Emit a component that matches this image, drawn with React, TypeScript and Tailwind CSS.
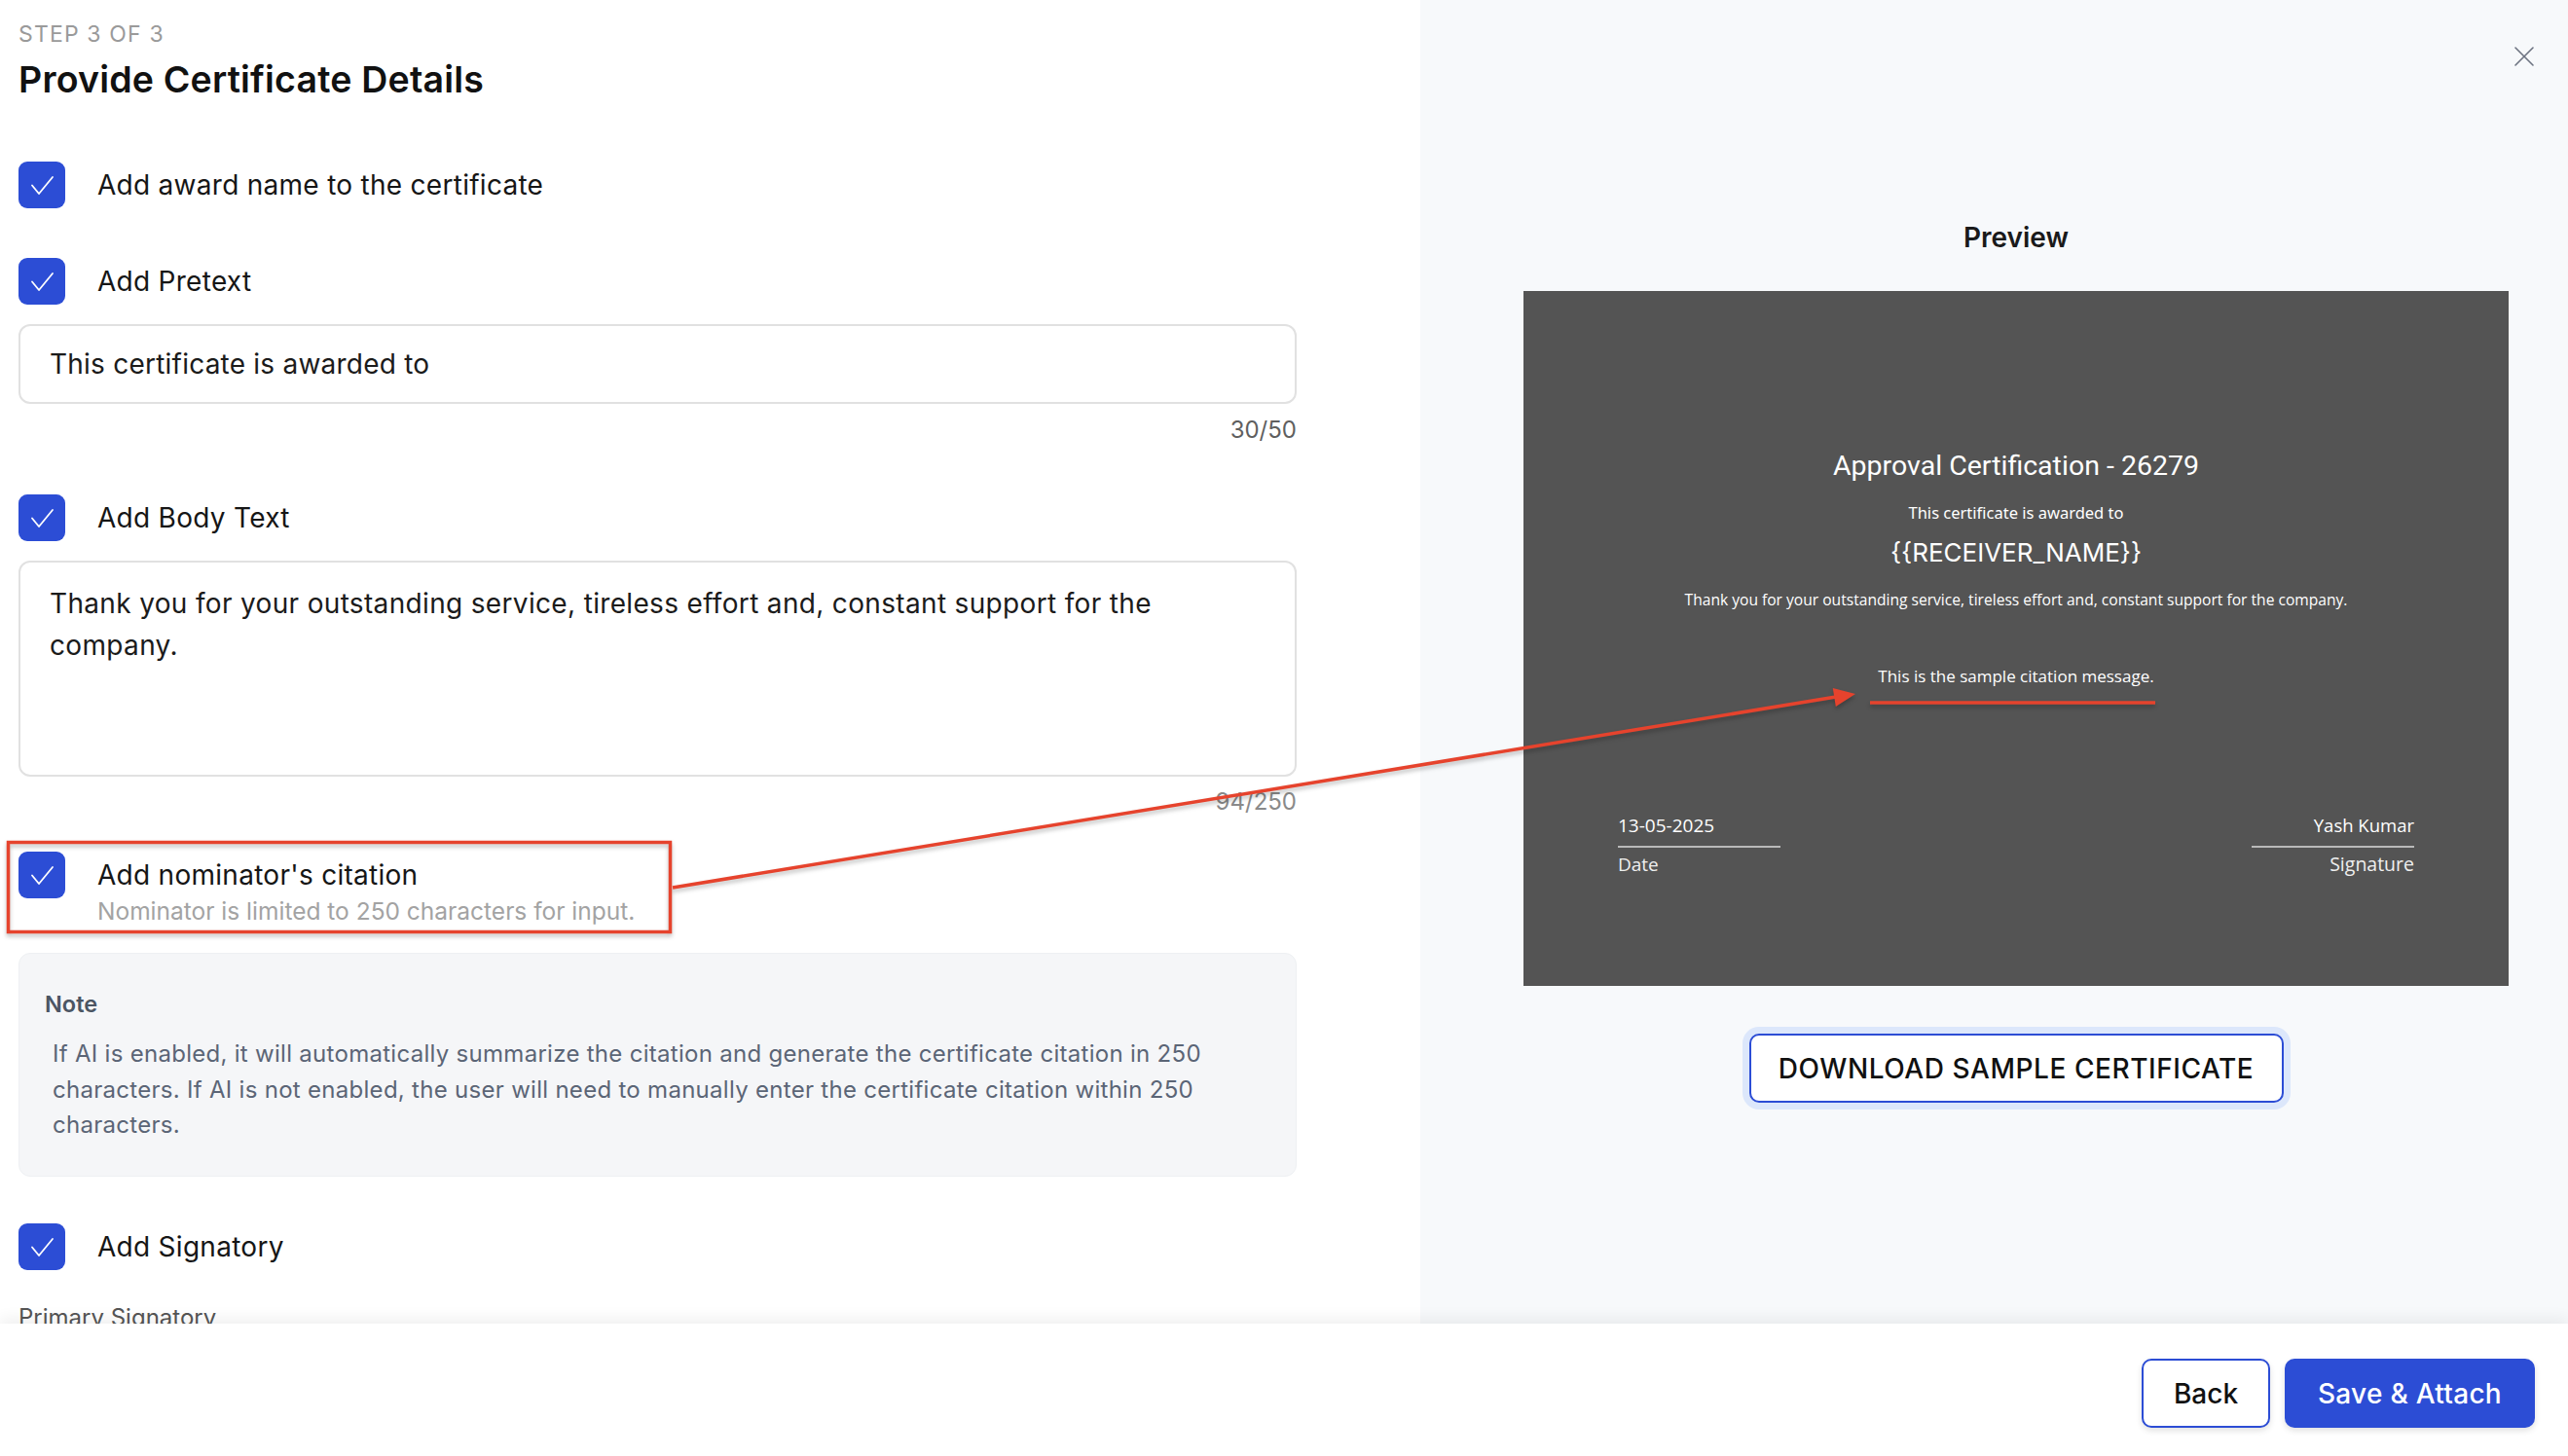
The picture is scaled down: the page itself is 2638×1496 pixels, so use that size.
import React from "react";

function CheckBox() {
  return (
    <div className="flex h-12 w-12 shrink-0 items-center justify-center rounded-[9px] bg-[#2c4dd5]">
      <svg viewBox="0 0 48 48" className="h-12 w-12" fill="none">
        <path d="M14 24.5 L21 33 L35 16" stroke="white" strokeWidth={1.8} strokeLinecap="round" strokeLinejoin="round" />
      </svg>
    </div>
  );
}

function CheckRow({ label, className = "" }: { label: string; className?: string }) {
  return (
    <div className={`flex items-center gap-[33px] ${className}`}>
      <CheckBox />
      <span className="text-[28px] leading-[48px] tracking-[0.01em] text-[#161616]">{label}</span>
    </div>
  );
}

function Certificate() {
  return (
    <div className="flex h-[714px] w-[1012px] shrink-0 flex-col items-center bg-[#545454] pt-[163px] text-white">
      <p className="font-['Roboto',sans-serif] text-[28.5px] leading-[33px]">Approval Certification - 26279</p>
      <p className="mt-[22px] font-['Noto_Sans',sans-serif] text-[16.5px] leading-[20px]">This certificate is awarded to</p>
      <p className="mt-[16px] font-['Inter',sans-serif] text-[26px] leading-[30px]">{"{{RECEIVER_NAME}}"}</p>
      <p className="mt-[23px] font-['Open_Sans',sans-serif] text-[15.6px] leading-[20px]">
        Thank you for your outstanding service, tireless effort and, constant support for the company.
      </p>
      <p className="mt-[58px] font-['Open_Sans',sans-serif] text-[17px] leading-[22px]">This is the sample citation message.</p>
      <div className="mt-[131px] flex w-full justify-between px-[97px] font-['Open_Sans',sans-serif]">
        <div className="flex w-[167px] flex-col">
          <span className="text-[19px] leading-[22px]">13-05-2025</span>
          <div className="mt-[10px] h-[2px] bg-[#b9b9b9]" />
          <span className="mt-[6px] text-[19px] leading-[22px] text-[#efefef]">Date</span>
        </div>
        <div className="flex w-[167px] flex-col items-end">
          <span className="text-[18.5px] leading-[22px]">Yash Kumar</span>
          <div className="mt-[10px] h-[2px] w-full bg-[#b9b9b9]" />
          <span className="mt-[6px] text-[19.5px] leading-[22px] text-[#efefef]">Signature</span>
        </div>
      </div>
    </div>
  );
}

export default function App() {
  return (
    <div className="relative flex h-[1496px] w-[2638px] flex-col overflow-hidden bg-white font-['Inter',sans-serif] text-[#161616]">
      <div className="flex h-[1360px] shrink-0">
        {/* Form column */}
        <div className="w-[1459px] shrink-0 overflow-hidden pl-[19px] pt-[21px]">
          <div className="w-[1313px]">
            <p className="text-[23px] leading-[28px] tracking-[0.05em] text-[#9a9a9a]">STEP 3 OF 3</p>
            <h1 className="mt-[11px] text-[37.5px] font-semibold leading-[44px] tracking-[0.005em] text-[#111]">
              Provide Certificate Details
            </h1>

            <CheckRow className="mt-[62px]" label="Add award name to the certificate" />
            <CheckRow className="mt-[51px]" label="Add Pretext" />

            <div className="mt-[20px] flex h-[82px] items-center rounded-[12px] border-2 border-[#e1e1e1] px-[30px] text-[28px] tracking-[0.008em] text-[#1b1b1b]">
              This certificate is awarded to
            </div>
            <p className="mt-[12px] text-right text-[24px] leading-[30px] text-[#5f5f5f]">30/50</p>

            <CheckRow className="mt-[51px]" label="Add Body Text" />
            <div className="mt-[20px] h-[222px] rounded-[12px] border-2 border-[#e1e1e1] px-[30px] pt-[21px] text-[28px] leading-[43px] tracking-[0.012em] text-[#1b1b1b]">
              Thank you for your outstanding service, tireless effort and, constant support for the
              <br />
              company.
            </div>
            <p className="mt-[11px] text-right text-[24px] leading-[30px] text-[#8a8a8a]">94/250</p>

            <div className="mt-[36px] flex items-start gap-[33px]">
              <CheckBox />
              <div className="flex flex-col">
                <span className="text-[28px] leading-[48px] tracking-[0.01em] text-[#161616]">Add nominator's citation</span>
                <span className="text-[24.5px] leading-[26px] text-[#a3a3a3]">Nominator is limited to 250 characters for input.</span>
              </div>
            </div>

            <div className="mt-[30px] rounded-[12px] border border-[#eef0f3] bg-[#f5f6f8] pb-[33px] pl-[26px] pr-[20px] pt-[38px]">
              <p className="text-[23.5px] font-semibold leading-[28px] text-[#4b5563]">Note</p>
              <p className="mt-[19px] whitespace-nowrap pl-[8px] text-[24px] leading-[36.5px] tracking-[0.012em] text-[#5b6576]">
                If AI is enabled, it will automatically summarize the citation and generate the certificate citation in 250
                <br />
                characters. If AI is not enabled, the user will need to manually enter the certificate citation within 250
                <br />
                characters.
              </p>
            </div>

            <CheckRow className="mt-[48px]" label="Add Signatory" />
            <p className="mt-[35px] text-[24px] leading-[28px] text-[#555]">Primary Signatory</p>
          </div>
        </div>

        {/* Preview column */}
        <div className="flex flex-1 flex-col bg-[#f7f9fb]">
          <div className="flex justify-end pr-[34px] pt-[47px]">
            <svg viewBox="0 0 22 22" className="h-[22px] w-[22px]" fill="none" stroke="#6b7280" strokeWidth={1.6} strokeLinecap="round">
              <path d="M2 2 L20 20 M20 2 L2 20" />
            </svg>
          </div>
          <div className="flex flex-col items-center pl-[106px] pr-[61px]">
            <h2 className="mt-[158px] text-[28px] font-semibold leading-[34px] text-[#1a1a1a]">Preview</h2>
            <div className="mt-[38px]">
              <Certificate />
            </div>
            <button className="mt-[49px] h-[71px] w-[549px] rounded-[10px] border-2 border-[#2c4dd5] bg-white text-[28px] font-medium tracking-[0.02em] text-[#111] ring-[7px] ring-[#dce7fb]">
              DOWNLOAD SAMPLE CERTIFICATE
            </button>
          </div>
        </div>
      </div>

      {/* Footer */}
      <div className="relative z-10 flex flex-1 items-start justify-end gap-[15px] bg-white pr-[34px] pt-[36px] shadow-[0_-6px_14px_rgba(0,0,0,0.06)]">
        <button className="h-[71px] w-[132px] rounded-[10px] border-2 border-[#2c4dd5] bg-white text-[28px] font-medium text-[#111] shadow-[0_3px_6px_rgba(0,0,0,0.12)]">
          Back
        </button>
        <button className="h-[71px] w-[257px] rounded-[10px] bg-[#2c4dd5] text-[28px] font-medium tracking-[0.01em] text-white shadow-[0_3px_6px_rgba(0,0,0,0.12)]">
          Save &amp; Attach
        </button>
      </div>

      {/* Annotation overlay */}
      <svg
        className="pointer-events-none absolute left-0 top-0 h-[1496px] w-[2638px] drop-shadow-[0_3px_2px_rgba(0,0,0,0.25)]"
        viewBox="0 0 2638 1496"
        fill="none"
      >
        <rect x={8.5} y={865.5} width={680} height={92} stroke="#e6432d" strokeWidth={3.5} />
        <line x1={691} y1={912} x2={1886} y2={716} stroke="#e6432d" strokeWidth={3.5} />
        <polygon points="1906,713 1885.8,726 1882.8,707" fill="#e6432d" />
        <line x1={1921} y1={722} x2={2214} y2={722} stroke="#e6432d" strokeWidth={3.5} />
      </svg>
    </div>
  );
}
